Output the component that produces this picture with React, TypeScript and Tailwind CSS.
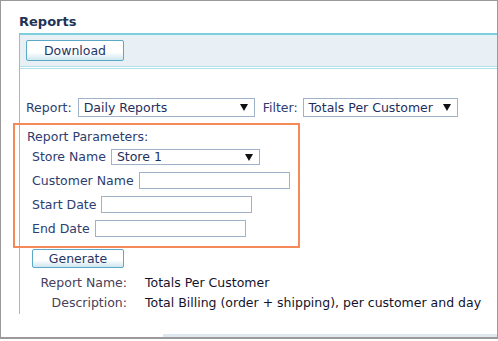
import React from "react";

const font = { fontFamily: '"DejaVu Sans", Verdana, sans-serif' };

const Arrow = () => (
  <svg width="8" height="7" viewBox="0 0 8 7" className="shrink-0">
    <path d="M0 0 H8 L4 7 Z" fill="#111" />
  </svg>
);

const Select: React.FC<{ value: string; className: string }> = ({ value, className }) => (
  <div
    className={`flex items-center justify-between border border-[#9fb2c8] bg-white pl-[5px] pr-[6px] text-[12.5px] leading-[16px] text-[#1f2f5c] ${className}`}
  >
    <span>{value}</span>
    <Arrow />
  </div>
);

const Input: React.FC<{ className: string }> = ({ className }) => (
  <div className={`border border-[#9fb2c8] bg-white ${className}`} />
);

const Btn: React.FC<{ label: string; className: string }> = ({ label, className }) => (
  <button
    className={`flex items-center justify-center rounded-[2px] border border-[#5aa9c6] bg-gradient-to-b from-white from-60% to-[#cfe6ef] text-[12.5px] leading-[16px] text-[#1f3566] ${className}`}
  >
    {label}
  </button>
);

export default function App() {
  return (
    <div className="h-[341px] w-[498px] bg-white" style={font}>
      <div className="flex h-[339px] w-[498px] flex-col border border-b-2 border-[#9a9a9a] bg-white">
        <h1 className="pl-[18px] pt-[13px] text-[13px] font-bold leading-[15px] text-[#1e3356]">
          Reports
        </h1>
        <div className="ml-[18px] mt-[4px] flex flex-col border-l border-[#7cc8d8] pb-[3px]">
          <div className="flex h-[33px] items-center border-t-2 border-[#7ccfdd] bg-[#e8f0f6] pl-[6px]">
            <Btn label="Download" className="h-[21px] w-[98px]" />
          </div>
          <div className="h-[3px] border-y border-[#b2e0e8] bg-white" />

          <div className="mt-[29px] flex items-center text-[12.5px] leading-[16px] text-[#2c3d70]">
            <span className="ml-[6px] mr-[6px]">Report:</span>
            <Select value="Daily Reports" className="h-[19px] w-[177px]" />
            <span className="ml-[8px] mr-[5px]">Filter:</span>
            <Select value="Totals Per Customer" className="h-[19px] w-[155px]" />
          </div>

          <div className="ml-[-7px] mt-[6px] flex w-[287px] flex-col gap-[7px] border-2 border-[#f58a58] pb-[9px] pl-[12px] pt-[4px] text-[12.5px] leading-[16px] text-[#2c3d70]">
            <div className="-mb-[3px]">Report Parameters:</div>
            <div className="ml-[5px] flex items-center">
              <span className="mr-[5px]">Store Name</span>
              <Select value="Store 1" className="h-[16px] w-[149px]" />
            </div>
            <div className="ml-[5px] flex items-center">
              <span className="mr-[5px]">Customer Name</span>
              <Input className="h-[17px] w-[151px]" />
            </div>
            <div className="ml-[5px] flex items-center">
              <span className="mr-[5px]">Start Date</span>
              <Input className="h-[17px] w-[151px]" />
            </div>
            <div className="ml-[5px] flex items-center">
              <span className="mr-[5px]">End Date</span>
              <Input className="h-[17px] w-[151px]" />
            </div>
          </div>

          <Btn label="Generate" className="ml-[12px] mt-[1px] h-[19px] w-[92px]" />

          <div className="mt-[7px] grid grid-cols-[107px_1fr] gap-x-[18px] gap-y-[4px] text-[12.5px] leading-[16px]">
            <span className="text-right text-[#48405a]">Report Name:</span>
            <span className="text-[#14122a]">Totals Per Customer</span>
            <span className="text-right text-[#48405a]">Description:</span>
            <span className="text-[#14122a]">Total Billing (order + shipping), per customer and day</span>
          </div>
        </div>
        <div className="ml-[162px] mt-auto h-[3px] bg-[#dfe8ee]" />
      </div>
    </div>
  );
}
